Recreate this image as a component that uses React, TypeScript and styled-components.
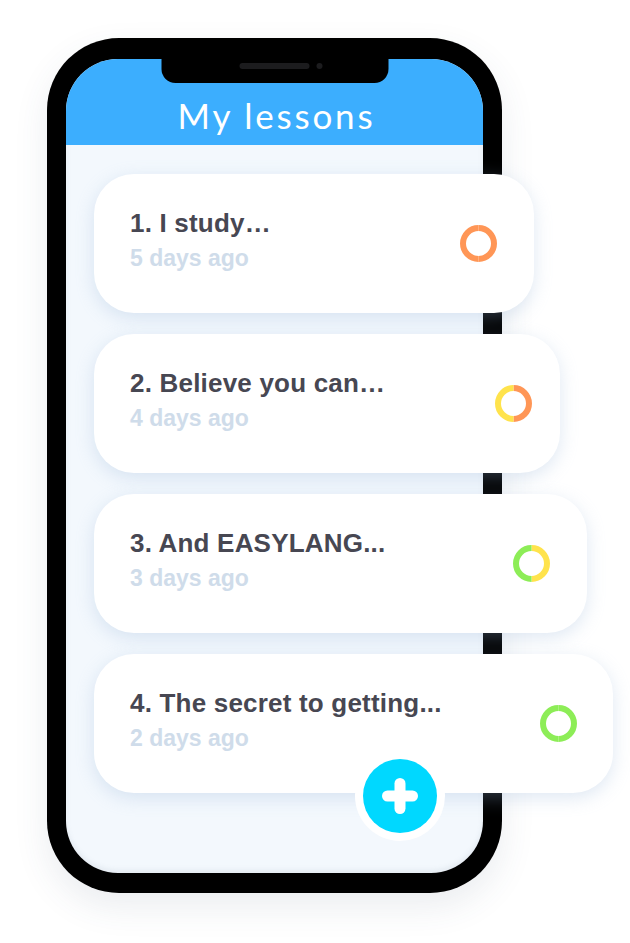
import React from "react";
import styled, { createGlobalStyle } from "styled-components";

const GlobalStyle = createGlobalStyle`
  html, body {
    margin: 0;
    padding: 0;
    background: #ffffff;
  }
  body {
    font-family: "Liberation Sans", Arial, sans-serif;
  }
`;

const Stage = styled.div`
  width: 630px;
  height: 943px;
  box-sizing: border-box;
  padding: 38px 0 0 47px;
  overflow: hidden;
`;

const Phone = styled.div`
  width: 455px;
  height: 855px;
  box-sizing: border-box;
  padding: 21px 19px 20px 19px;
  background: #000;
  border-radius: 72px;
  box-shadow: 0 14px 34px rgba(60, 80, 110, 0.1);
`;

const Screen = styled.div`
  position: relative;
  height: 100%;
  border-radius: 52px;
  background: #f3f8fd;
  display: flex;
  flex-direction: column;
  box-shadow: inset 0 -3px 5px rgba(120, 140, 160, 0.12);
`;

const Notch = styled.div`
  position: absolute;
  top: 0;
  left: 50%;
  transform: translateX(-50%);
  width: 227px;
  height: 24px;
  background: #000;
  border-radius: 0 0 14px 14px;
  display: flex;
  justify-content: center;
  align-items: flex-start;
  gap: 7px;
  padding-top: 4px;
  box-sizing: border-box;
`;

const Speaker = styled.div`
  width: 70px;
  height: 6px;
  border-radius: 3px;
  background: #1c1c1e;
  margin-left: 12px;
`;

const Camera = styled.div`
  width: 6px;
  height: 6px;
  border-radius: 50%;
  background: #1c1c1e;
`;

const Header = styled.div`
  height: 86px;
  flex: none;
  background: #3caefe;
  border-radius: 52px 52px 0 0;
  display: flex;
  justify-content: center;
  align-items: flex-start;
  box-sizing: border-box;
  padding-top: 36px;
`;

const Title = styled.h1`
  margin: 0 0 0 4px;
  font-family: "Lato", "Open Sans", sans-serif;
  font-weight: 400;
  font-size: 35px;
  line-height: 40px;
  letter-spacing: 2.8px;
  color: #ffffff;
`;

const List = styled.div`
  display: flex;
  flex-direction: column;
  gap: 21px;
  padding: 29px 0 0 28px;
`;

const Card = styled.div<{ $width: number; $pr: number }>`
  width: ${(p) => p.$width}px;
  height: 139px;
  box-sizing: border-box;
  padding: 0 ${(p) => p.$pr}px 0 36px;
  background: #ffffff;
  border-radius: 40px;
  display: flex;
  justify-content: space-between;
  align-items: center;
  box-shadow: 0 5px 18px rgba(150, 180, 215, 0.3);
`;

const TextBlock = styled.div`
  align-self: flex-start;
  padding-top: 34px;
  display: flex;
  flex-direction: column;
`;

const LessonTitle = styled.div`
  font-family: "Liberation Sans", Arial, sans-serif;
  font-weight: 700;
  font-size: 26px;
  line-height: 30px;
  letter-spacing: 0.2px;
  color: #474752;
  white-space: nowrap;
`;

const LessonDate = styled.div`
  margin-top: 5px;
  font-family: "Liberation Sans", Arial, sans-serif;
  font-weight: 700;
  font-size: 23px;
  line-height: 30px;
  color: #cfdcea;
  white-space: nowrap;
`;

const RingSvg = styled.svg`
  flex: none;
  display: block;
`;

const FabRing = styled.div`
  position: absolute;
  left: 289px;
  top: 692px;
  width: 90px;
  height: 90px;
  border-radius: 50%;
  background: #ffffff;
  display: flex;
  align-items: center;
  justify-content: center;
`;

const Fab = styled.button`
  width: 74px;
  height: 74px;
  border-radius: 50%;
  border: none;
  padding: 0;
  background: #00d8ff;
  display: flex;
  align-items: center;
  justify-content: center;
  cursor: pointer;
`;

const Ring: React.FC<{ left: string; right: string }> = ({ left, right }) => {
  const c = 18.5;
  const r = 15.5;
  return (
    <RingSvg width="37" height="37" viewBox="0 0 37 37">
      <path
        d={`M ${c} ${c - r} A ${r} ${r} 0 0 1 ${c} ${c + r}`}
        fill="none"
        stroke={right}
        strokeWidth="6"
      />
      <path
        d={`M ${c} ${c + r} A ${r} ${r} 0 0 1 ${c} ${c - r}`}
        fill="none"
        stroke={left}
        strokeWidth="6"
      />
    </RingSvg>
  );
};

const ORANGE = "#ff9656";
const YELLOW = "#ffe34c";
const GREEN = "#8ded57";

const lessons = [
  { title: "1. I study…", date: "5 days ago", width: 440, pr: 37, left: ORANGE, right: ORANGE },
  { title: "2. Believe you can…", date: "4 days ago", width: 466, pr: 28, left: YELLOW, right: ORANGE },
  { title: "3. And EASYLANG...", date: "3 days ago", width: 493, pr: 37, left: GREEN, right: YELLOW },
  { title: "4. The secret to getting...", date: "2 days ago", width: 519, pr: 36, left: GREEN, right: GREEN },
];

export default function App() {
  return (
    <>
      <GlobalStyle />
      <Stage>
        <Phone>
          <Screen>
            <Header>
              <Title>My lessons</Title>
            </Header>
            <Notch>
              <Speaker />
              <Camera />
            </Notch>
            <List>
              {lessons.map((l) => (
                <Card key={l.title} $width={l.width} $pr={l.pr}>
                  <TextBlock>
                    <LessonTitle>{l.title}</LessonTitle>
                    <LessonDate>{l.date}</LessonDate>
                  </TextBlock>
                  <Ring left={l.left} right={l.right} />
                </Card>
              ))}
            </List>
            <FabRing>
              <Fab aria-label="Add lesson">
                <svg width="36" height="36" viewBox="0 0 36 36">
                  <line x1="18" y1="5.5" x2="18" y2="30.5" stroke="#fff" strokeWidth="11" strokeLinecap="round" />
                  <line x1="5.5" y1="18" x2="30.5" y2="18" stroke="#fff" strokeWidth="11" strokeLinecap="round" />
                </svg>
              </Fab>
            </FabRing>
          </Screen>
        </Phone>
      </Stage>
    </>
  );
}
